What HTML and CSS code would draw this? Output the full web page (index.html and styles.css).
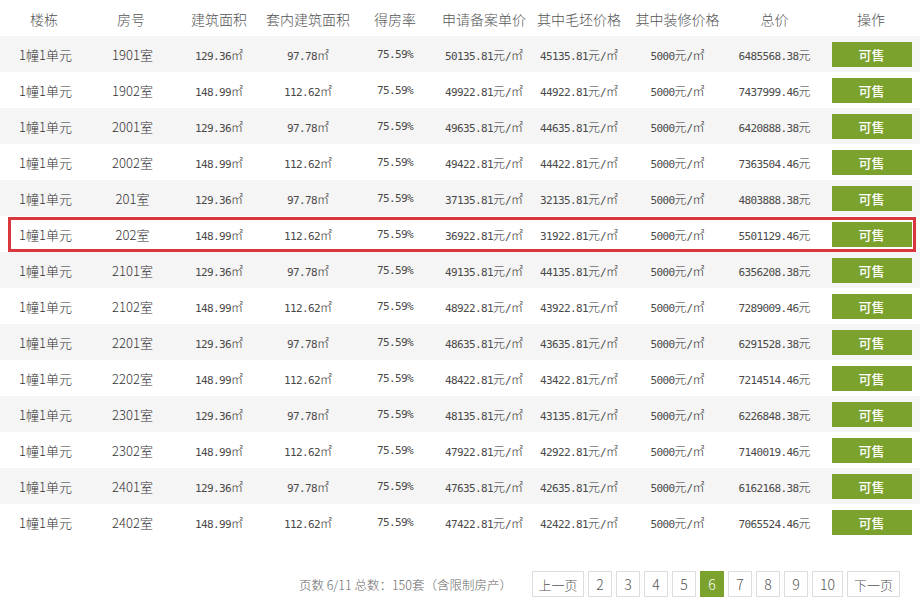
FILE: index.html
```html
<!DOCTYPE html>
<html lang="zh-CN">
<head>
<meta charset="utf-8">
<title>房源列表</title>
<link rel="stylesheet" href="styles.css">
</head>
<body>
<div class="page">
  <div class="table">
    <div class="row head">
      <div>楼栋</div><div>房号</div><div>建筑面积</div><div>套内建筑面积</div><div>得房率</div><div>申请备案单价</div><div>其中毛坯价格</div><div>其中装修价格</div><div>总价</div><div>操作</div>
    </div>
    <div class="row odd">
      <div class="cn">1幢1单元</div><div class="cn">1901室</div><div class="n">129.36<i>㎡</i></div><div class="n">97.78<i>㎡</i></div><div class="n">75.59%</div><div class="n">50135.81<i>元</i>/<i>㎡</i></div><div class="n">45135.81<i>元</i>/<i>㎡</i></div><div class="n">5000<i>元</i>/<i>㎡</i></div><div class="n">6485568.38<i>元</i></div><div><span class="btn">可售</span></div>
    </div>
    <div class="row">
      <div class="cn">1幢1单元</div><div class="cn">1902室</div><div class="n">148.99<i>㎡</i></div><div class="n">112.62<i>㎡</i></div><div class="n">75.59%</div><div class="n">49922.81<i>元</i>/<i>㎡</i></div><div class="n">44922.81<i>元</i>/<i>㎡</i></div><div class="n">5000<i>元</i>/<i>㎡</i></div><div class="n">7437999.46<i>元</i></div><div><span class="btn">可售</span></div>
    </div>
    <div class="row odd">
      <div class="cn">1幢1单元</div><div class="cn">2001室</div><div class="n">129.36<i>㎡</i></div><div class="n">97.78<i>㎡</i></div><div class="n">75.59%</div><div class="n">49635.81<i>元</i>/<i>㎡</i></div><div class="n">44635.81<i>元</i>/<i>㎡</i></div><div class="n">5000<i>元</i>/<i>㎡</i></div><div class="n">6420888.38<i>元</i></div><div><span class="btn">可售</span></div>
    </div>
    <div class="row">
      <div class="cn">1幢1单元</div><div class="cn">2002室</div><div class="n">148.99<i>㎡</i></div><div class="n">112.62<i>㎡</i></div><div class="n">75.59%</div><div class="n">49422.81<i>元</i>/<i>㎡</i></div><div class="n">44422.81<i>元</i>/<i>㎡</i></div><div class="n">5000<i>元</i>/<i>㎡</i></div><div class="n">7363504.46<i>元</i></div><div><span class="btn">可售</span></div>
    </div>
    <div class="row odd">
      <div class="cn">1幢1单元</div><div class="cn">201室</div><div class="n">129.36<i>㎡</i></div><div class="n">97.78<i>㎡</i></div><div class="n">75.59%</div><div class="n">37135.81<i>元</i>/<i>㎡</i></div><div class="n">32135.81<i>元</i>/<i>㎡</i></div><div class="n">5000<i>元</i>/<i>㎡</i></div><div class="n">4803888.38<i>元</i></div><div><span class="btn">可售</span></div>
    </div>
    <div class="row hl">
      <div class="cn">1幢1单元</div><div class="cn">202室</div><div class="n">148.99<i>㎡</i></div><div class="n">112.62<i>㎡</i></div><div class="n">75.59%</div><div class="n">36922.81<i>元</i>/<i>㎡</i></div><div class="n">31922.81<i>元</i>/<i>㎡</i></div><div class="n">5000<i>元</i>/<i>㎡</i></div><div class="n">5501129.46<i>元</i></div><div><span class="btn">可售</span></div>
    </div>
    <div class="row odd">
      <div class="cn">1幢1单元</div><div class="cn">2101室</div><div class="n">129.36<i>㎡</i></div><div class="n">97.78<i>㎡</i></div><div class="n">75.59%</div><div class="n">49135.81<i>元</i>/<i>㎡</i></div><div class="n">44135.81<i>元</i>/<i>㎡</i></div><div class="n">5000<i>元</i>/<i>㎡</i></div><div class="n">6356208.38<i>元</i></div><div><span class="btn">可售</span></div>
    </div>
    <div class="row">
      <div class="cn">1幢1单元</div><div class="cn">2102室</div><div class="n">148.99<i>㎡</i></div><div class="n">112.62<i>㎡</i></div><div class="n">75.59%</div><div class="n">48922.81<i>元</i>/<i>㎡</i></div><div class="n">43922.81<i>元</i>/<i>㎡</i></div><div class="n">5000<i>元</i>/<i>㎡</i></div><div class="n">7289009.46<i>元</i></div><div><span class="btn">可售</span></div>
    </div>
    <div class="row odd">
      <div class="cn">1幢1单元</div><div class="cn">2201室</div><div class="n">129.36<i>㎡</i></div><div class="n">97.78<i>㎡</i></div><div class="n">75.59%</div><div class="n">48635.81<i>元</i>/<i>㎡</i></div><div class="n">43635.81<i>元</i>/<i>㎡</i></div><div class="n">5000<i>元</i>/<i>㎡</i></div><div class="n">6291528.38<i>元</i></div><div><span class="btn">可售</span></div>
    </div>
    <div class="row">
      <div class="cn">1幢1单元</div><div class="cn">2202室</div><div class="n">148.99<i>㎡</i></div><div class="n">112.62<i>㎡</i></div><div class="n">75.59%</div><div class="n">48422.81<i>元</i>/<i>㎡</i></div><div class="n">43422.81<i>元</i>/<i>㎡</i></div><div class="n">5000<i>元</i>/<i>㎡</i></div><div class="n">7214514.46<i>元</i></div><div><span class="btn">可售</span></div>
    </div>
    <div class="row odd">
      <div class="cn">1幢1单元</div><div class="cn">2301室</div><div class="n">129.36<i>㎡</i></div><div class="n">97.78<i>㎡</i></div><div class="n">75.59%</div><div class="n">48135.81<i>元</i>/<i>㎡</i></div><div class="n">43135.81<i>元</i>/<i>㎡</i></div><div class="n">5000<i>元</i>/<i>㎡</i></div><div class="n">6226848.38<i>元</i></div><div><span class="btn">可售</span></div>
    </div>
    <div class="row">
      <div class="cn">1幢1单元</div><div class="cn">2302室</div><div class="n">148.99<i>㎡</i></div><div class="n">112.62<i>㎡</i></div><div class="n">75.59%</div><div class="n">47922.81<i>元</i>/<i>㎡</i></div><div class="n">42922.81<i>元</i>/<i>㎡</i></div><div class="n">5000<i>元</i>/<i>㎡</i></div><div class="n">7140019.46<i>元</i></div><div><span class="btn">可售</span></div>
    </div>
    <div class="row odd">
      <div class="cn">1幢1单元</div><div class="cn">2401室</div><div class="n">129.36<i>㎡</i></div><div class="n">97.78<i>㎡</i></div><div class="n">75.59%</div><div class="n">47635.81<i>元</i>/<i>㎡</i></div><div class="n">42635.81<i>元</i>/<i>㎡</i></div><div class="n">5000<i>元</i>/<i>㎡</i></div><div class="n">6162168.38<i>元</i></div><div><span class="btn">可售</span></div>
    </div>
    <div class="row">
      <div class="cn">1幢1单元</div><div class="cn">2402室</div><div class="n">148.99<i>㎡</i></div><div class="n">112.62<i>㎡</i></div><div class="n">75.59%</div><div class="n">47422.81<i>元</i>/<i>㎡</i></div><div class="n">42422.81<i>元</i>/<i>㎡</i></div><div class="n">5000<i>元</i>/<i>㎡</i></div><div class="n">7065524.46<i>元</i></div><div><span class="btn">可售</span></div>
    </div>
  </div>
  <div class="pager">
    <span class="info">页数 6/11 总数：150套（含限制房产）</span>
    <span class="pg wide">上一页</span>
    <span class="pg">2</span>
    <span class="pg">3</span>
    <span class="pg">4</span>
    <span class="pg">5</span>
    <span class="pg active">6</span>
    <span class="pg">7</span>
    <span class="pg">8</span>
    <span class="pg">9</span>
    <span class="pg two">10</span>
    <span class="pg wide">下一页</span>
  </div>
</div>
</body>
</html>
```
FILE: styles.css
```css
* { box-sizing: border-box; }
html, body { margin: 0; padding: 0; background: #fff; }
body {
  font-family: "Noto Sans CJK SC", "Microsoft YaHei", sans-serif;
  font-weight: 300;
  color: #333;
  width: 923px;
  height: 603px;
  overflow: hidden;
}
.page { width: 923px; }
.table { width: 920px; }
.row {
  display: grid;
  grid-template-columns: 88px 86px 90px 88px 86px 92px 98px 99px 95px 98px;
  height: 36px;
  align-items: center;
  text-align: center;
  position: relative;
  white-space: nowrap;
}
.row.odd { background: #f5f5f5; }
.row.head {
  font-size: 14px;
  color: #555;
  height: 36px;
  padding-top: 1px;
}
.cn { font-size: 13px; color: #333; padding-left: 3px; }
.n {
  font-family: "DejaVu Sans Mono", monospace;
  font-weight: 400;
  font-size: 11px;
  letter-spacing: -0.6px;
  color: #4a4a4a;
}
.n i {
  font-style: normal;
  font-family: "Noto Sans CJK SC", sans-serif;
  font-weight: 300;
  font-size: 12px;
  letter-spacing: 0;
  color: #333;
}
.btn {
  display: inline-flex;
  align-items: center;
  justify-content: center;
  width: 80px;
  height: 25px;
  background: #7aa22d;
  color: #fff;
  font-size: 13px;
  font-weight: 500;
  margin-left: 1px;
}
.row.hl::after {
  content: "";
  position: absolute;
  left: 8px;
  right: 4px;
  top: 1px;
  bottom: 0;
  border: 3px solid #d9363d;
  pointer-events: none;
}
.pager {
  display: flex;
  align-items: center;
  justify-content: flex-end;
  gap: 4px;
  margin-top: 31px;
  padding-right: 23px;
}
.info {
  font-size: 12.5px;
  color: #666;
  margin-right: 16px;
}
.pg {
  display: inline-flex;
  align-items: center;
  justify-content: center;
  width: 24px;
  height: 26px;
  border: 1px solid #ddd;
  font-size: 14px;
  color: #555;
  background: #fff;
}
.pg.two { width: 31px; }
.pg.wide { font-size: 13px; width: 52px; }
.pg.wide:last-child { width: 53px; }
.pg.active { background: #7aa22d; border-color: #7aa22d; color: #fff; }
```
